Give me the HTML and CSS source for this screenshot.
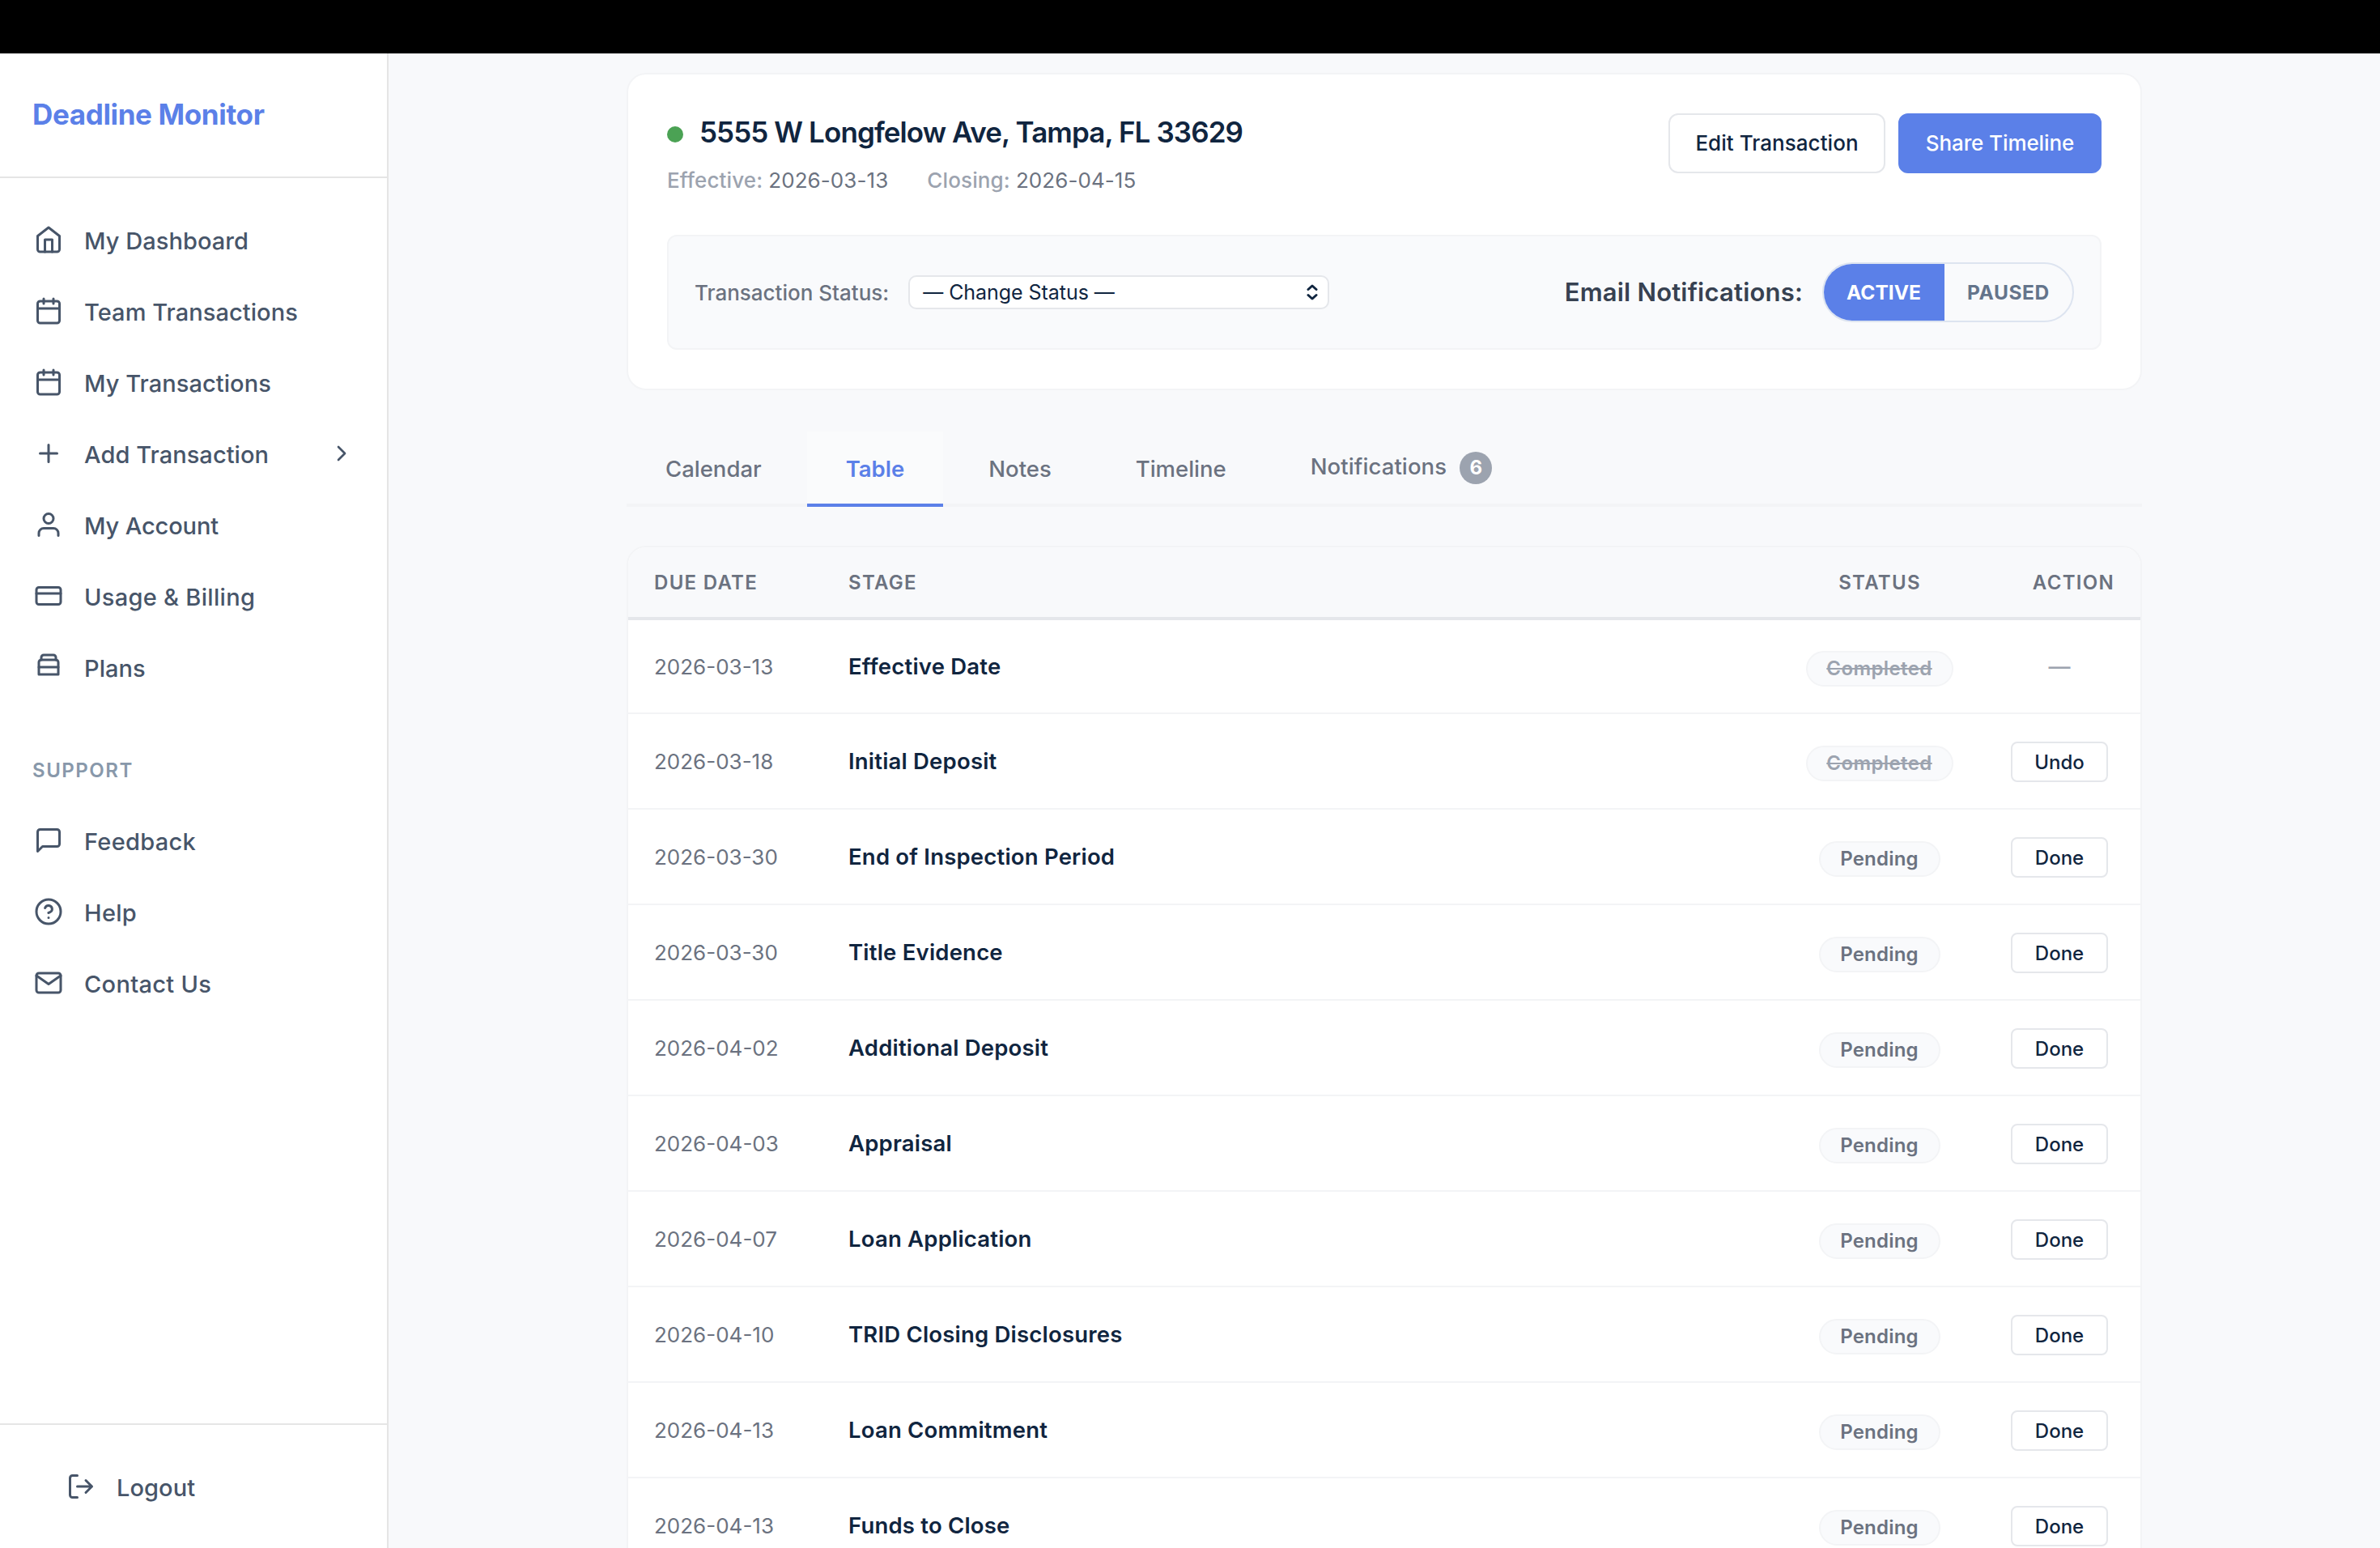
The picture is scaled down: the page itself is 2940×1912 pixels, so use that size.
FILE: index.html
```html
<!DOCTYPE html>
<html lang="en">
<head>
<meta charset="utf-8">
<title>Deadline Monitor</title>
<link rel="stylesheet" href="styles.css">
</head>
<body>
<div class="topbar"></div>
<div class="app">
  <aside class="sidebar">
    <div class="brand">Deadline Monitor</div>
    <nav class="nav">
      <a class="nav-item"><svg class="icon" viewBox="0 0 24 24"><path d="M3 9l9-7 9 7v11a2 2 0 0 1-2 2H5a2 2 0 0 1-2-2z"/><path d="M9 22V12h6v10"/></svg><span class="nav-label">My Dashboard</span></a>
      <a class="nav-item"><svg class="icon" viewBox="0 0 24 24"><rect x="3" y="4" width="18" height="18" rx="2"/><path d="M16 2v4M8 2v4M3 10h18"/></svg><span class="nav-label">Team Transactions</span></a>
      <a class="nav-item"><svg class="icon" viewBox="0 0 24 24"><rect x="3" y="4" width="18" height="18" rx="2"/><path d="M16 2v4M8 2v4M3 10h18"/></svg><span class="nav-label">My Transactions</span></a>
      <a class="nav-item"><svg class="icon" viewBox="0 0 24 24"><path d="M12 5v14M5 12h14"/></svg><span class="nav-label">Add Transaction</span><svg class="icon chevron" viewBox="0 0 24 24"><path d="M9 18l6-6-6-6"/></svg></a>
      <a class="nav-item"><svg class="icon" viewBox="0 0 24 24"><path d="M20 21v-2a4 4 0 0 0-4-4H8a4 4 0 0 0-4 4v2"/><circle cx="12" cy="7" r="4"/></svg><span class="nav-label tight">My Account</span></a>
      <a class="nav-item"><svg class="icon" viewBox="0 0 24 24"><rect x="2" y="5" width="20" height="14" rx="2"/><path d="M2 10h20"/></svg><span class="nav-label wide">Usage &amp; Billing</span></a>
      <a class="nav-item"><svg class="icon" viewBox="0 0 24 24"><path d="M4 18V8a2 2 0 0 1 2-2h12a2 2 0 0 1 2 2v10z"/><path d="M4 12h16"/><path d="M6 6V4a2 2 0 0 1 2-2h8a2 2 0 0 1 2 2v2"/></svg><span class="nav-label">Plans</span></a>
      <div class="nav-heading">SUPPORT</div>
      <a class="nav-item"><svg class="icon" viewBox="0 0 24 24"><path d="M21 15a2 2 0 0 1-2 2H7l-4 4V5a2 2 0 0 1 2-2h14a2 2 0 0 1 2 2z"/></svg><span class="nav-label wide">Feedback</span></a>
      <a class="nav-item"><svg class="icon" viewBox="0 0 24 24"><circle cx="12" cy="12" r="10"/><path d="M9.09 9a3 3 0 0 1 5.83 1c0 2-3 3-3 3M12 17h.01"/></svg><span class="nav-label wide">Help</span></a>
      <a class="nav-item"><svg class="icon" viewBox="0 0 24 24"><rect x="2" y="4" width="20" height="16" rx="2"/><path d="M22 6l-10 7L2 6"/></svg><span class="nav-label wide">Contact Us</span></a>
    </nav>
    <div class="sidebar-footer">
      <a class="nav-item logout"><svg class="icon" viewBox="0 0 24 24"><path d="M9 21H5a2 2 0 0 1-2-2V5a2 2 0 0 1 2-2h4M16 17l5-5-5-5M21 12H9"/></svg><span class="nav-label">Logout</span></a>
    </div>
  </aside>

  <main class="main">
    <section class="summary">
      <div class="summary-top">
        <div>
          <div class="title-row"><span class="dot"></span><h1 class="title">5555 W Longfelow Ave, Tampa, FL 33629</h1></div>
          <div class="meta">
            <div class="meta-item"><span class="meta-key">Effective:</span><span>2026-03-13</span></div>
            <div class="meta-item"><span class="meta-key">Closing:</span><span>2026-04-15</span></div>
          </div>
        </div>
        <div class="actions">
          <button class="btn">Edit Transaction</button>
          <button class="btn btn-primary">Share Timeline</button>
        </div>
      </div>
      <div class="controls">
        <span class="status-label">Transaction Status:</span>
        <div class="select"><span>— Change Status —</span><svg class="select-arrows" viewBox="0 0 14 20"><path d="M2 6.500l5-4.500 5 4.500M2 13.500l5 4.500 5-4.500"/></svg></div>
        <span class="email-label">Email Notifications:</span>
        <div class="toggle"><span class="toggle-option on">ACTIVE</span><span class="toggle-option off">PAUSED</span></div>
      </div>
    </section>

    <div class="tabs">
      <a class="tab">Calendar</a>
      <a class="tab active">Table</a>
      <a class="tab">Notes</a>
      <a class="tab">Timeline</a>
      <a class="tab with-count"><span class="tab-text">Notifications</span><span class="count">6</span></a>
    </div>

    <section class="table">
      <div class="row head"><span>DUE DATE</span><span>STAGE</span><span class="status">STATUS</span><span class="head-action">ACTION</span></div>
      <div class="row"><span class="date">2026-03-13</span><span class="stage">Effective Date</span><span class="status"><span class="badge done">Completed</span></span><span class="action dash">—</span></div>
      <div class="row"><span class="date">2026-03-18</span><span class="stage">Initial Deposit</span><span class="status"><span class="badge done">Completed</span></span><span class="action"><button class="btn-small">Undo</button></span></div>
      <div class="row"><span class="date">2026-03-30</span><span class="stage">End of Inspection Period</span><span class="status"><span class="badge">Pending</span></span><span class="action"><button class="btn-small">Done</button></span></div>
      <div class="row"><span class="date">2026-03-30</span><span class="stage">Title Evidence</span><span class="status"><span class="badge">Pending</span></span><span class="action"><button class="btn-small">Done</button></span></div>
      <div class="row"><span class="date">2026-04-02</span><span class="stage">Additional Deposit</span><span class="status"><span class="badge">Pending</span></span><span class="action"><button class="btn-small">Done</button></span></div>
      <div class="row"><span class="date">2026-04-03</span><span class="stage">Appraisal</span><span class="status"><span class="badge">Pending</span></span><span class="action"><button class="btn-small">Done</button></span></div>
      <div class="row"><span class="date">2026-04-07</span><span class="stage">Loan Application</span><span class="status"><span class="badge">Pending</span></span><span class="action"><button class="btn-small">Done</button></span></div>
      <div class="row"><span class="date">2026-04-10</span><span class="stage">TRID Closing Disclosures</span><span class="status"><span class="badge">Pending</span></span><span class="action"><button class="btn-small">Done</button></span></div>
      <div class="row"><span class="date">2026-04-13</span><span class="stage">Loan Commitment</span><span class="status"><span class="badge">Pending</span></span><span class="action"><button class="btn-small">Done</button></span></div>
      <div class="row"><span class="date">2026-04-13</span><span class="stage">Funds to Close</span><span class="status"><span class="badge">Pending</span></span><span class="action"><button class="btn-small">Done</button></span></div>
    </section>
  </main>
</div>
</body>
</html>
```
FILE: styles.css
```css
* { box-sizing: border-box; }

body {
  margin: 0;
  height: 100vh;
  overflow: hidden;
  display: flex;
  flex-direction: column;
  background: #f8f9fb;
  color: #10253f;
  font-family: Inter, "Liberation Sans", sans-serif;
  white-space: nowrap;
}

button { font-family: inherit; padding: 0; }

.topbar { height: 66px; flex: none; background: #000; }
.app { display: flex; flex: 1; min-height: 0; }

/* Sidebar */
.sidebar {
  width: 480px;
  flex: none;
  display: flex;
  flex-direction: column;
  background: #fff;
  border-right: 2px solid #e5e5e5;
}
.brand {
  height: 154px;
  padding: 53px 40px 0;
  border-bottom: 2px solid #e5e5e5;
  font-size: 35px;
  line-height: 44px;
  font-weight: 650;
  letter-spacing: -0.36px;
  color: #5b80e8;
}
.nav { flex: 1; padding-top: 32px; }
.nav-item {
  display: flex;
  align-items: center;
  gap: 26px;
  height: 88px;
  padding: 0 40px 0 42px;
  color: #475569;
}
.nav-label {
  padding-top: 2px;
  font-size: 29px;
  font-weight: 500;
  letter-spacing: 0.06px;
}
.nav-label.wide { letter-spacing: 0.3px; }
.nav-label.tight { letter-spacing: -0.12px; }
.nav-heading {
  height: 126px;
  padding: 68px 40px 0;
  font-size: 24px;
  line-height: 32px;
  font-weight: 600;
  letter-spacing: 1.53px;
  color: #8898aa;
}
.icon {
  width: 36px;
  height: 36px;
  flex: none;
  fill: none;
  stroke: currentColor;
  stroke-width: 2;
  stroke-linecap: round;
  stroke-linejoin: round;
}
.chevron { width: 32px; height: 32px; margin-left: auto; }
.sidebar-footer {
  height: 154px;
  padding: 32px 40px;
  border-top: 2px solid #e5e5e5;
}

/* Main column */
.main {
  width: 1872px;
  margin: 24px auto 0 294px;
  display: flex;
  flex-direction: column;
}
.summary {
  height: 392px;
  flex: none;
  padding: 48px;
  background: #fff;
  border: 2px solid #f3f4f6;
  border-radius: 24px;
}
.summary-top { display: flex; justify-content: space-between; height: 150px; }
.title-row { display: flex; align-items: center; gap: 20px; height: 46px; }
.dot { width: 20px; height: 20px; margin-top: 6px; border-radius: 50%; background: #4ba254; }
.title { margin: 0; font-size: 35px; line-height: 46px; font-weight: 640; letter-spacing: -0.9px; }
.meta {
  display: flex;
  gap: 48px;
  margin-top: 19px;
  font-size: 26px;
  line-height: 36px;
  letter-spacing: 0.08px;
  color: #6b7280;
}
.meta-item { display: flex; gap: 7px; }
.meta-key { letter-spacing: 0.13px; font-weight: 500; color: #9ca3af; }

.actions { display: flex; gap: 16px; }
.btn {
  width: 268px;
  height: 74px;
  padding-bottom: 1px;
  border: 2px solid #e5e7eb;
  border-radius: 12px;
  background: #fff;
  color: #10253f;
  font-size: 26px;
  font-weight: 500;
  letter-spacing: 0.05px;
}
.btn-primary { width: 251px; border-color: #5b80e8; background: #5b80e8; color: #fff; letter-spacing: -0.1px; }

.controls {
  display: flex;
  align-items: center;
  height: 142px;
  padding: 0 32px;
  background: #f9fafc;
  border: 2px solid #f3f4f6;
  border-radius: 12px;
}
.status-label { padding-top: 1px; font-size: 26px; font-weight: 500; color: #6b7280; }
.select {
  display: flex;
  align-items: center;
  justify-content: space-between;
  width: 520px;
  height: 42px;
  margin-left: 24px;
  padding: 0 12px 0 16px;
  background: #fff;
  border: 2px solid #e5e7eb;
  border-radius: 10px;
  font-size: 25px;
  line-height: 36px;
  letter-spacing: -0.05px;
}
.select-arrows {
  width: 14px;
  height: 20px;
  fill: none;
  stroke: currentColor;
  stroke-width: 3;
  stroke-linecap: round;
  stroke-linejoin: round;
}
.email-label {
  margin-left: auto;
  padding-bottom: 1px;
  font-size: 31px;
  font-weight: 600;
  letter-spacing: 0.2px;
  color: #374151;
}
.toggle {
  display: flex;
  width: 311px;
  height: 74px;
  margin-left: 24px;
  overflow: hidden;
  border: 2px solid #dde4f0;
  border-radius: 37px;
}
.toggle-option {
  display: flex;
  align-items: center;
  justify-content: center;
  width: 149px;
  font-size: 24.5px;
  font-weight: 700;
}
.toggle-option.on { padding-right: 1px; background: #5b80e8; color: #fff; }
.toggle-option.off { width: 158px; letter-spacing: 0.6px; color: #64748b; }

/* Tabs */
.tabs {
  display: flex;
  gap: 8px;
  height: 93px;
  flex: none;
  margin-top: 51px;
  box-shadow: inset 0 -4px #f3f4f6;
}
.tab {
  padding: 28px 48px 0;
  border-bottom: 4px solid transparent;
  font-size: 27.5px;
  line-height: 36px;
  font-weight: 500;
  color: #6b7280;
}
.tab.active { background: #fafbfc; border-color: #5b80e8; color: #5b80e8; font-weight: 600; }
.tab.with-count { display: flex; align-items: flex-start; gap: 16px; padding-top: 25px; }
.tab-text { letter-spacing: 0.1px; }
.count {
  width: 40px;
  height: 40px;
  border-radius: 50%;
  background: #9ca3af;
  color: #fff;
  font-size: 24px;
  line-height: 40px;
  font-weight: 700;
  text-align: center;
}

/* Deadlines table */
.table {
  margin-top: 48px;
  flex: none;
  overflow: hidden;
  background: #fff;
  border: 2px solid #f3f4f6;
  border-radius: 24px;
}
.row {
  display: grid;
  grid-template-columns: 240px 1fr 200px 54px 136px;
  align-items: center;
  height: 118px;
  padding: 0 32px;
  border-bottom: 2px solid #f3f4f6;
}
.head {
  height: 90px;
  background: #f8f9fb;
  border-bottom: 4px solid #e5e7eb;
  font-size: 24px;
  font-weight: 600;
  letter-spacing: 1.3px;
  color: #6b7280;
}
.head + .row { height: 116px; }
.head-action { grid-column: 5; text-align: right; }
.date { font-size: 26px; color: #6b7280; }
.stage { font-size: 27.5px; font-weight: 600; letter-spacing: 0.2px; }
.status { display: flex; justify-content: center; }
.badge {
  height: 44px;
  margin-top: 6px;
  padding: 0 25px 0 24px;
  border: 2px solid #f3f4f6;
  border-radius: 22px;
  background: #f9fafc;
  font-size: 24px;
  line-height: 40px;
  font-weight: 600;
  letter-spacing: 0.2px;
  color: #6b7280;
}
.badge.done { padding: 0 24px 0 23px; letter-spacing: 0.4px; color: #9ca3af; text-decoration: line-through; }
.action { grid-column: 5; display: flex; justify-content: center; }
.dash { padding-top: 1px; font-size: 27px; font-weight: 500; color: #9ca3af; }
.btn-small {
  width: 120px;
  height: 50px;
  margin-top: 2px;
  border: 2px solid #e5e7eb;
  border-radius: 8px;
  background: #fff;
  color: #10253f;
  font-size: 24px;
  font-weight: 500;
}
```
